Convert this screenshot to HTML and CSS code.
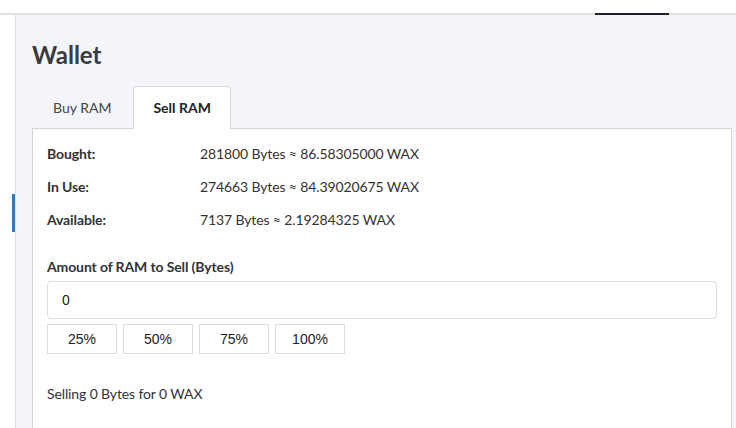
FILE: index.html
```html
<!DOCTYPE html>
<html lang="en">
<head>
<meta charset="utf-8">
<title>Wallet</title>
<link rel="stylesheet" href="styles.css">
</head>
<body>
<div class="topbar"></div>
<div class="topline"><div class="topline-active"></div></div>
<div class="layout">
  <aside class="sidebar"><div class="sidebar-marker"></div></aside>
  <main class="content">
    <h1 class="title">Wallet</h1>
    <div class="tabs">
      <div class="tab">Buy RAM</div>
      <div class="tab active">Sell RAM</div>
    </div>
    <div class="panel">
      <div class="stats">
        <div class="row"><span class="label">Bought:</span><span class="value">281800 Bytes ≈ 86.58305000 WAX</span></div>
        <div class="row"><span class="label">In Use:</span><span class="value">274663 Bytes ≈ 84.39020675 WAX</span></div>
        <div class="row"><span class="label">Available:</span><span class="value">7137 Bytes ≈ 2.19284325 WAX</span></div>
      </div>
      <div class="field-label">Amount of RAM to Sell (Bytes)</div>
      <input class="amount" type="text" value="0">
      <div class="percents">
        <button class="pct">25%</button>
        <button class="pct">50%</button>
        <button class="pct">75%</button>
        <button class="pct">100%</button>
      </div>
      <div class="summary">Selling 0 Bytes for 0 WAX</div>
    </div>
  </main>
</div>
</body>
</html>
```

FILE: styles.css
```css
html, body {
  margin: 0;
  padding: 0;
  background: #ffffff;
  font-family: Lato, "Liberation Sans", sans-serif;
  color: #333333;
  font-size: 14px;
  height: 100%;
  overflow: hidden;
}

.topbar {
  height: 13px;
  background: #ffffff;
}

.topline {
  height: 2px;
  background: #e0e0e0;
  display: flex;
}

.topline-active {
  margin-left: 595px;
  width: 74px;
  height: 2px;
  background: #1e2126;
}

.layout {
  display: flex;
  height: calc(100% - 15px);
}

.sidebar {
  width: 15px;
  flex: none;
  background: #ffffff;
  border-right: 1px solid #dedede;
  display: flex;
  flex-direction: column;
  align-items: flex-end;
}

.sidebar-marker {
  margin-top: 179px;
  width: 3px;
  height: 38px;
  background: #2b7bc6;
}

.content {
  flex: 1;
  background: #f3f5fb;
  padding: 25px 4px 0 16px;
  min-width: 0;
}

.title {
  margin: 0;
  font-size: 24px;
  line-height: 30px;
  font-weight: 700;
  color: #3b3b3b;
}

.tabs {
  display: flex;
  margin-top: 16px;
  gap: 2px;
}

.tab {
  padding: 11px 19px;
  line-height: 20px;
  font-size: 14px;
  color: #444444;
  border: 1px solid transparent;
  border-bottom: none;
  border-radius: 4px 4px 0 0;
  margin-bottom: -1px;
  position: relative;
  z-index: 1;
}

.tab:first-child {
  margin-left: 1px;
}

.tab.active {
  background: #ffffff;
  border-color: #d9d9d9;
  font-weight: 700;
  color: #222222;
}

.panel {
  background: #ffffff;
  border: 1px solid #d4d4d4;
  padding: 15px 14px 60px 14px;
  letter-spacing: -0.12px;
}

.stats {
  display: flex;
  flex-direction: column;
  gap: 13px;
}

.row {
  display: flex;
  line-height: 20px;
}

.label {
  width: 153px;
  flex: none;
  font-weight: 700;
  color: #333333;
}

.value {
  color: #333333;
}

.field-label {
  margin-top: 27px;
  line-height: 20px;
  font-weight: 700;
  color: #333333;
}

.amount {
  display: block;
  box-sizing: border-box;
  width: 100%;
  height: 38px;
  margin: 4px 0 0 0;
  padding: 0 14px;
  border: 1px solid #dcdcdc;
  border-radius: 4px;
  font-family: "Liberation Sans", Arial, sans-serif;
  font-size: 14px;
  color: #222222;
  background: #ffffff;
  outline: none;
}

.percents {
  display: flex;
  gap: 6px;
  margin-top: 5px;
}

.pct {
  width: 70px;
  height: 30px;
  box-sizing: border-box;
  border: 1px solid #dcdcdc;
  border-radius: 0;
  background: #ffffff;
  font-family: "Liberation Sans", Arial, sans-serif;
  font-size: 14px;
  color: #222222;
  padding: 0;
}

.summary {
  margin-top: 30px;
  line-height: 20px;
  color: #333333;
}
```
